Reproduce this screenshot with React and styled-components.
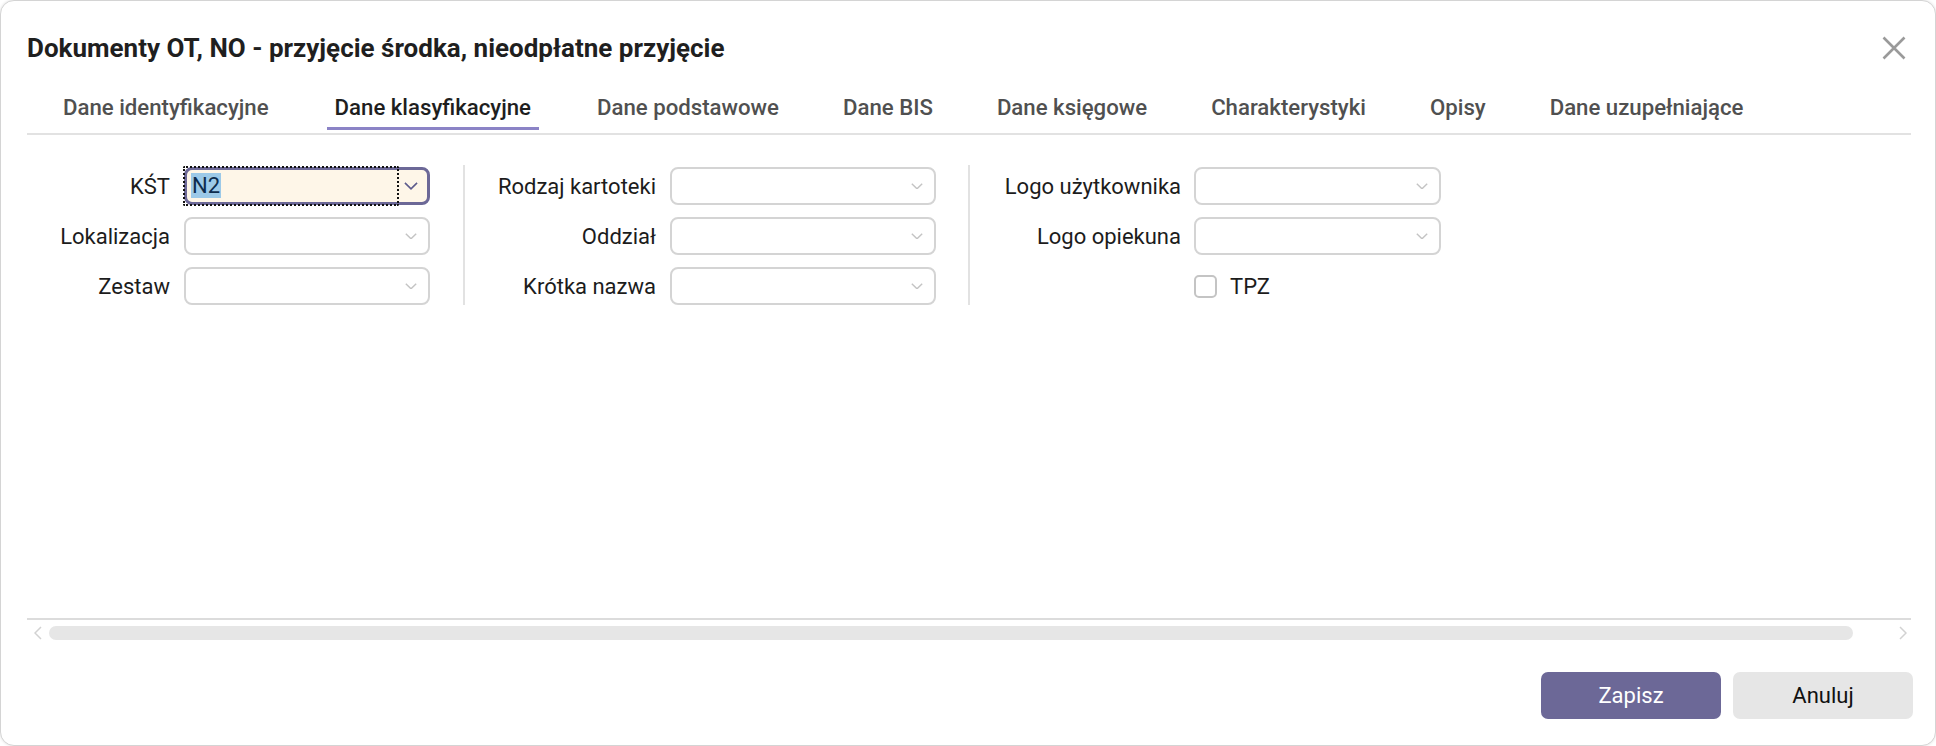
import React from "react";
import styled, { createGlobalStyle } from "styled-components";

const Global = createGlobalStyle`
  html, body { margin: 0; padding: 0; background: #ffffff; }
  body { font-family: Roboto, "Liberation Sans", Arial, sans-serif; }
  #root { height: 746px; }
  * { box-sizing: border-box; }
`;

const Dialog = styled.div`
  height: 746px;
  width: 1936px;
  border: 1px solid #d4d4d4;
  border-radius: 14px;
  background: #fff;
  display: flex;
  flex-direction: column;
  box-shadow: 0 0 3px rgba(0, 0, 0, 0.12);
  overflow: hidden;
`;

const Header = styled.div`
  height: 93px;
  display: flex;
  align-items: center;
  justify-content: space-between;
  padding: 0 28px 0 26px;
`;

const Title = styled.h1`
  margin: 0;
  font-size: 26px;
  font-weight: 700;
  color: #1f1f1f;
  letter-spacing: 0;
`;

const CloseButton = styled.button`
  border: 0;
  background: transparent;
  padding: 0;
  width: 26px;
  height: 26px;
  display: flex;
  align-items: center;
  justify-content: center;
  cursor: pointer;
`;

const TabBar = styled.div`
  display: flex;
  margin: 0 24px 0 26px;
  padding-left: 4px;
  border-bottom: 2px solid #e2e2e2;
`;

const Tab = styled.div`
  padding: 0 8px 7px;
  margin: 0 ${(p) => (p.$first ? "26px" : "24px")} 3px 24px;
  line-height: 26px;
  font-size: 22.2px;
  font-weight: 500;
  color: ${(p) => (p.$active ? "#1e1e1e" : "#505050")};
  border-bottom: 3px solid ${(p) => (p.$active ? "#8b83c6" : "transparent")};
  white-space: nowrap;
`;

const Form = styled.div`
  flex: 1;
  display: flex;
  align-items: flex-start;
  padding: 30px 0 0 26px;
`;

const Column = styled.div`
  display: grid;
  grid-template-columns: ${(p) => p.$label}px ${(p) => p.$input}px;
  column-gap: ${(p) => p.$gap}px;
  row-gap: 12px;
  padding: 2px ${(p) => p.$right}px 0 ${(p) => p.$left}px;
  border-left: ${(p) => (p.$divider ? "2px solid #e2e2e2" : "0")};
  align-items: center;
`;

const Label = styled.label`
  text-align: right;
  font-size: 22px;
  color: #1c1c1c;
  white-space: nowrap;
`;

const Select = styled.div`
  position: relative;
  height: 38px;
  border: ${(p) => (p.$focused ? "3px solid #6c6897" : "2px solid #d4d4d4")};
  border-radius: 8px;
  background: ${(p) => (p.$focused ? "#fef6e8" : "#ffffff")};
  display: flex;
  align-items: center;
`;

const Value = styled.div`
  flex: 1;
  padding-left: 4px;
  font-size: 22px;
  line-height: 26px;
  color: #0d2c4e;
`;

const Selected = styled.span`
  background: #9cc9e8;
  padding: 0 1px;
`;

const FocusRing = styled.span`
  position: absolute;
  left: -4px;
  top: -4px;
  bottom: -4px;
  right: 28px;
  border: 2px dotted #111;
  border-radius: 2px;
  pointer-events: none;
`;

const Chevron = styled.div`
  width: 30px;
  display: flex;
  align-items: center;
  justify-content: center;
  padding-right: ${(p) => (p.$focused ? "2px" : "4px")};
`;

const Spacer = styled.div``;

const CheckRow = styled.div`
  display: flex;
  align-items: center;
  gap: 13px;
  height: 38px;
`;

const Checkbox = styled.span`
  width: 23px;
  height: 23px;
  border: 2px solid #c4c4c4;
  border-radius: 5px;
  background: #fff;
`;

const CheckText = styled.span`
  font-size: 22px;
  color: #1c1c1c;
`;

const ScrollSection = styled.div`
  margin: 0 24px 0 26px;
  border-top: 2px solid #dcdcdc;
  height: 32px;
  display: flex;
  align-items: flex-start;
  padding-top: 6px;
`;

const ScrollArrow = styled.div`
  width: ${(p) => (p.$left ? "22px" : "58px")};
  height: 14px;
  display: flex;
  align-items: center;
  justify-content: ${(p) => (p.$left ? "center" : "flex-end")};
  padding-right: ${(p) => (p.$left ? "0" : "4px")};
`;

const ScrollThumb = styled.div`
  flex: 1;
  height: 14px;
  border-radius: 7px;
  background: #e6e6e6;
`;

const Footer = styled.div`
  display: flex;
  justify-content: flex-end;
  gap: 12px;
  padding: 22px 22px 26px;
`;

const Button = styled.button`
  width: 180px;
  height: 47px;
  border: 0;
  border-radius: 7px;
  font-family: Roboto, "Liberation Sans", Arial, sans-serif;
  font-size: 22px;
  background: ${(p) => (p.$primary ? "#6c6897" : "#e6e6e6")};
  color: ${(p) => (p.$primary ? "#ffffff" : "#111111")};
  cursor: pointer;
`;

const ChevronIcon = ({ color, w = 12 }) => (
  <svg width={w} height={w * 0.55} viewBox="0 0 12 6.6" fill="none">
    <polyline points="0.8,0.8 6,5.8 11.2,0.8" stroke={color} strokeWidth="1.4" />
  </svg>
);

const Field = ({ label, focused, value }) => (
  <>
    <Label>{label}</Label>
    <Select $focused={focused}>
      {focused && <FocusRing />}
      <Value>{value ? <Selected>{value}</Selected> : null}</Value>
      <Chevron $focused={focused}>
        <ChevronIcon color={focused ? "#5d5b8c" : "#c4c4c4"} w={focused ? 14 : 12} />
      </Chevron>
    </Select>
  </>
);

const tabs = [
  "Dane identyfikacyjne",
  "Dane klasyfikacyjne",
  "Dane podstawowe",
  "Dane BIS",
  "Dane księgowe",
  "Charakterystyki",
  "Opisy",
  "Dane uzupełniające",
];

export default function App() {
  return (
    <>
      <Global />
      <Dialog>
        <Header>
          <Title>Dokumenty OT, NO - przyjęcie środka, nieodpłatne przyjęcie</Title>
          <CloseButton aria-label="Zamknij">
            <svg width="24" height="24" viewBox="0 0 24 24">
              <path d="M1.5 1.5 L22.5 22.5 M22.5 1.5 L1.5 22.5" stroke="#9a9a9a" strokeWidth="2.6" />
            </svg>
          </CloseButton>
        </Header>
        <TabBar>
          {tabs.map((t, i) => (
            <Tab key={t} $first={i < 2} $active={t === "Dane klasyfikacyjne"}>
              {t}
            </Tab>
          ))}
        </TabBar>
        <Form>
          <Column $label={123} $input={246} $gap={14} $left={20} $right={33}>
            <Field label="KŚT" focused value="N2" />
            <Field label="Lokalizacja" />
            <Field label="Zestaw" />
          </Column>
          <Column $divider $label={172} $input={266} $gap={14} $left={19} $right={32}>
            <Field label="Rodzaj kartoteki" />
            <Field label="Oddział" />
            <Field label="Krótka nazwa" />
          </Column>
          <Column $divider $label={192} $input={247} $gap={13} $left={19} $right={0}>
            <Field label="Logo użytkownika" />
            <Field label="Logo opiekuna" />
            <Spacer />
            <CheckRow>
              <Checkbox />
              <CheckText>TPZ</CheckText>
            </CheckRow>
          </Column>
        </Form>
        <ScrollSection>
          <ScrollArrow $left>
            <svg width="8" height="14" viewBox="0 0 8 14" fill="none">
              <polyline points="7,1 1,7 7,13" stroke="#d2d2d2" strokeWidth="1.5" />
            </svg>
          </ScrollArrow>
          <ScrollThumb />
          <ScrollArrow>
            <svg width="8" height="14" viewBox="0 0 8 14" fill="none">
              <polyline points="1,1 7,7 1,13" stroke="#d2d2d2" strokeWidth="1.5" />
            </svg>
          </ScrollArrow>
        </ScrollSection>
        <Footer>
          <Button $primary>Zapisz</Button>
          <Button>Anuluj</Button>
        </Footer>
      </Dialog>
    </>
  );
}
